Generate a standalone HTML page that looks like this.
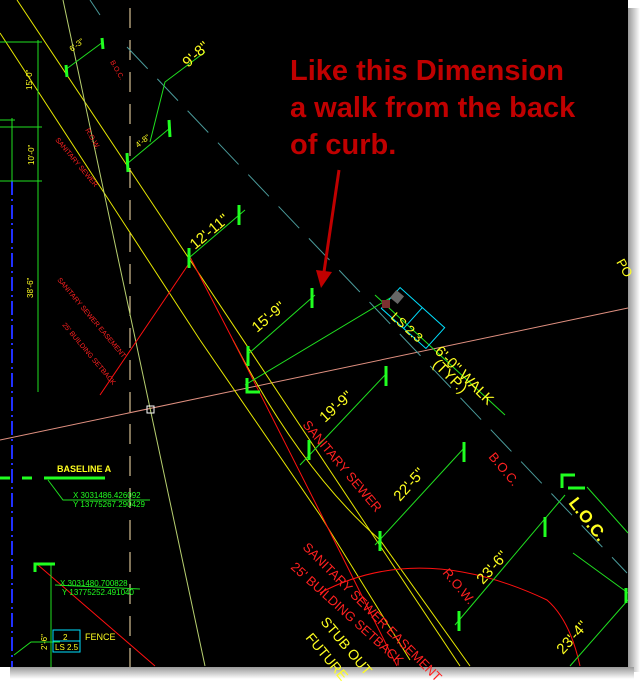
<!DOCTYPE html>
<html><head><meta charset="utf-8"><style>
html,body{margin:0;padding:0;background:#fff;width:643px;height:682px;overflow:hidden}
svg{display:block}
text{font-family:"Liberation Sans",sans-serif}
</style></head><body>
<svg width="643" height="682" viewBox="0 0 643 682" xmlns="http://www.w3.org/2000/svg">
<defs>
<linearGradient id="sr" x1="0" x2="1"><stop offset="0" stop-color="#999"/><stop offset="1" stop-color="#fff"/></linearGradient>
<linearGradient id="sb" x1="0" y1="0" x2="0" y2="1"><stop offset="0" stop-color="#999"/><stop offset="1" stop-color="#fff"/></linearGradient>
</defs>
<rect width="643" height="682" fill="#fff"/>
<rect x="628" y="8" width="12" height="664" fill="url(#sr)"/>
<rect x="10" y="667" width="624" height="12" fill="url(#sb)"/>
<rect x="0" y="0" width="628" height="667" fill="#000"/>
<g fill="none" stroke-width="1">
<line x1="0" y1="440" x2="628" y2="308" stroke="#e09080"/>
<line x1="130" y1="8" x2="130" y2="667" stroke="#ffe6b0" stroke-dasharray="20,12"/>
<line x1="12" y1="181" x2="12" y2="667" stroke="#2030ff" stroke-width="2" stroke-dasharray="14,4,2,4"/>
<line x1="17" y1="0" x2="460" y2="666" stroke="#e8e800"/>
<line x1="0" y1="33" x2="200" y2="340" stroke="#e8e800"/>
<path d="M200 340 L320 515 L410 660" stroke="#e8e800"/>
<path d="M233 340 Q300 470 380 540 L470 666" stroke="#e8e800" />
<line x1="63" y1="0" x2="205" y2="666" stroke="#b8d070"/>
<path d="M190 257 L233 340 L320 512 L397 666" stroke="#ff1010"/>
<path d="M100 395 L190 262" stroke="#ff1010"/>
<path d="M38 565 L155 666" stroke="#ff1010"/>
<path d="M320 593 Q420 540 547 600 Q570 620 580 666" stroke="#ff1010"/>
<path d="M90 0 L100 15 M127 47 L627 573" stroke="#4a9a9a" stroke-dasharray="30,14"/>
<g stroke="#20e020">
<line x1="38" y1="40" x2="38" y2="392"/>
<line x1="12" y1="118" x2="12" y2="181"/>
<line x1="0" y1="42" x2="42" y2="42"/><line x1="0" y1="127" x2="42" y2="127"/><line x1="0" y1="181" x2="42" y2="181"/><line x1="0" y1="120" x2="15" y2="120"/>
<line x1="65" y1="70" x2="103" y2="42"/>
<line x1="128" y1="163" x2="170" y2="128"/>
<path d="M150 142 L165 82 L205 52"/>
<line x1="190" y1="257" x2="245" y2="210"/>
<line x1="247" y1="355" x2="315" y2="295"/>
<line x1="245" y1="385" x2="395" y2="295"/>
<line x1="300" y1="465" x2="385" y2="375"/>
<line x1="375" y1="545" x2="465" y2="447"/>
<line x1="455" y1="625" x2="565" y2="495"/>
<line x1="375" y1="295" x2="505" y2="415"/>
<line x1="587" y1="487" x2="628" y2="533"/>
<line x1="573" y1="553" x2="628" y2="593"/>
<line x1="570" y1="666" x2="628" y2="600"/>
<path d="M48 480 L63 500 L150 500"/>
<line x1="55" y1="585" x2="140" y2="589"/>
<line x1="51" y1="563" x2="51" y2="667"/>
<path d="M14 655 L31 642 L60 642"/>
</g>
<g stroke="#20ff20" stroke-width="3">
<line x1="0" y1="478" x2="105" y2="478" stroke-dasharray="10,12"/>
<line x1="48" y1="478" x2="105" y2="478"/>
<line x1="66" y1="65" x2="67" y2="77"/><line x1="102" y1="38" x2="103" y2="49"/>
<line x1="127" y1="153" x2="128" y2="172"/><line x1="169" y1="120" x2="170" y2="137"/>
<line x1="189" y1="248" x2="189" y2="268"/><line x1="239" y1="205" x2="239" y2="225"/>
<line x1="248" y1="346" x2="248" y2="366"/><line x1="312" y1="288" x2="312" y2="308"/>
<line x1="309" y1="440" x2="309" y2="460"/><line x1="386" y1="366" x2="386" y2="386"/>
<line x1="380" y1="531" x2="380" y2="551"/><line x1="464" y1="442" x2="464" y2="462"/>
<line x1="459" y1="611" x2="459" y2="631"/><line x1="545" y1="517" x2="545" y2="537"/>
<line x1="626" y1="588" x2="626" y2="603"/>
<path d="M247 378 L247 392 L260 392"/>
<path d="M562 488 L562 475 L575 475 M568 488 L585 488"/>
<path d="M35 572 L35 564 L55 564"/>
</g>
<rect x="147" y="406" width="7" height="7" stroke="#fff"/>
<rect x="53" y="630" width="27" height="22" stroke="#00e0ff"/>
<line x1="53" y1="641" x2="80" y2="641" stroke="#00e0ff"/>
<g transform="translate(413,318) rotate(42)"><rect x="-30" y="-14" width="60" height="28" stroke="#00e0ff"/><line x1="0" y1="-14" x2="0" y2="14" stroke="#00e0ff"/></g>
<line x1="339" y1="170" x2="324" y2="272" stroke="#c00000" stroke-width="3"/>
</g>
<polygon points="316,270 332,272 321,288" fill="#c00000"/>
<rect x="392" y="292" width="10" height="10" fill="#666" transform="rotate(40 397 297)"/>
<rect x="382" y="300" width="8" height="8" fill="#7a3030"/>
<g font-weight="bold" font-size="29" fill="#c00000">
<text x="290" y="80">Like this Dimension</text>
<text x="290" y="117">a walk from the back</text>
<text x="290" y="154">of curb.</text>
</g>
<g fill="#ffff20" font-size="15">
<text transform="translate(188,68) rotate(-42)">9'-8"</text>
<text transform="translate(195,250) rotate(-40)">12'-11"</text>
<text transform="translate(257,333) rotate(-40)">15'-9"</text>
<text transform="translate(325,423) rotate(-42)">19'-9"</text>
<text transform="translate(400,502) rotate(-48)">22'-5"</text>
<text transform="translate(483,585) rotate(-48)">23'-6"</text>
<text transform="translate(563,655) rotate(-48)">23'-4"</text>
<text transform="translate(434,352) rotate(45)">6'-0" WALK</text>
<text transform="translate(432,365) rotate(45)">(TYP.)</text>
<text font-size="13" transform="translate(390,318) rotate(42)">LS 2.3</text>
<text font-weight="bold" font-size="17" transform="translate(568,503) rotate(52)">L.O.C.</text>
<text font-size="14" transform="translate(320,622) rotate(50)">STUB OUT</text>
<text font-size="14" transform="translate(305,638) rotate(50)">FUTURE</text>
<text font-size="13" transform="translate(616,262) rotate(60)">PO</text>
<text font-size="8" transform="translate(72,52) rotate(-38)">6'-3"</text>
<text font-size="8" transform="translate(138,148) rotate(-38)">4'-8"</text>
<text font-size="8" transform="translate(32,90) rotate(-90)">15'-0"</text>
<text font-size="8" transform="translate(34,165) rotate(-90)">10'-0"</text>
<text font-size="8" transform="translate(33,298) rotate(-90)">38'-6"</text>
<text font-size="8" transform="translate(47,650) rotate(-90)">2'-6"</text>
<text font-weight="bold" font-size="9" x="57" y="472">BASELINE A</text>
<text font-size="9" x="85" y="640">FENCE</text>
<text font-size="8" x="63" y="640">2</text>
<text font-size="8" x="55" y="650">LS 2.5</text>
</g>
<g fill="#20ff20" font-size="8">
<text x="73" y="498">X 3031486.426092</text>
<text x="73" y="507">Y 13775267.290429</text>
<text x="60" y="586">X 3031480.700828</text>
<text x="62" y="595">Y 13775252.491040</text>
</g>
<g fill="#ff2020" font-size="13">
<text transform="translate(302,425) rotate(50)">SANITARY SEWER</text>
<text transform="translate(442,573) rotate(50)">R.O.W.</text>
<text transform="translate(488,457) rotate(50)">B.O.C.</text>
<text transform="translate(302,548) rotate(45)">SANITARY SEWER EASEMENT</text>
<text transform="translate(290,568) rotate(42)">25' BUILDING SETBACK</text>
<text font-size="7" transform="translate(110,62) rotate(60)">B.O.C.</text>
<text font-size="7" transform="translate(85,130) rotate(60)">R.O.W.</text>
<text font-size="7" transform="translate(55,140) rotate(50)">SANITARY SEWER</text>
<text font-size="7" transform="translate(57,280) rotate(50)">SANITARY SEWER EASEMENT</text>
<text font-size="7" transform="translate(62,325) rotate(50)">25' BUILDING SETBACK</text>
</g>
</svg>
</body></html>
